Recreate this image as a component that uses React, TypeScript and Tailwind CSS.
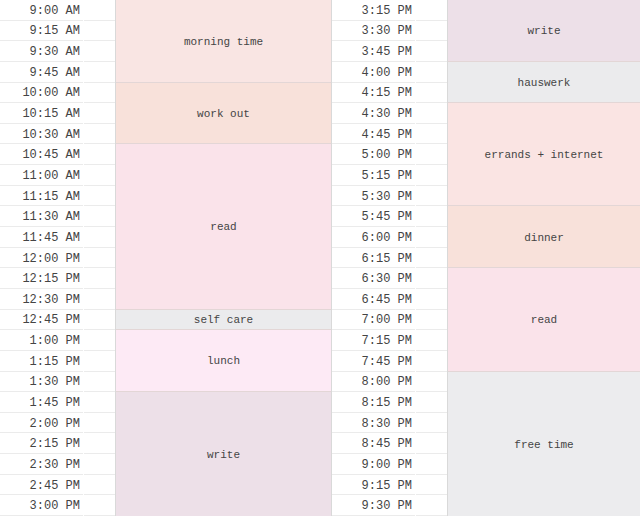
const left = {
  times: [
    "9:00 AM", "9:15 AM", "9:30 AM", "9:45 AM", "10:00 AM", "10:15 AM", "10:30 AM",
    "10:45 AM", "11:00 AM", "11:15 AM", "11:30 AM", "11:45 AM", "12:00 PM", "12:15 PM",
    "12:30 PM", "12:45 PM", "1:00 PM", "1:15 PM", "1:30 PM", "1:45 PM", "2:00 PM",
    "2:15 PM", "2:30 PM", "2:45 PM", "3:00 PM",
  ],
  blocks: [
    { label: "morning time", span: "row-span-4", bg: "bg-[#f9e5e3]" },
    { label: "work out", span: "row-span-3", bg: "bg-[#f8e1da]" },
    { label: "read", span: "row-span-8", bg: "bg-[#fae3ea]" },
    { label: "self care", span: "row-span-1", bg: "bg-[#ebebed]" },
    { label: "lunch", span: "row-span-3", bg: "bg-[#fdeaf5]" },
    { label: "write", span: "row-span-6", bg: "bg-[#ede0e8]" },
  ],
};

const right = {
  times: [
    "3:15 PM", "3:30 PM", "3:45 PM", "4:00 PM", "4:15 PM", "4:30 PM", "4:45 PM",
    "5:00 PM", "5:15 PM", "5:30 PM", "5:45 PM", "6:00 PM", "6:15 PM", "6:30 PM",
    "6:45 PM", "7:00 PM", "7:15 PM", "7:45 PM", "8:00 PM", "8:15 PM", "8:30 PM",
    "8:45 PM", "9:00 PM", "9:15 PM", "9:30 PM",
  ],
  blocks: [
    { label: "write", span: "row-span-3", bg: "bg-[#ede0e8]" },
    { label: "hauswerk", span: "row-span-2", bg: "bg-[#ebebed]" },
    { label: "errands + internet", span: "row-span-5", bg: "bg-[#fae4e3]" },
    { label: "dinner", span: "row-span-3", bg: "bg-[#f8e1da]" },
    { label: "read", span: "row-span-5", bg: "bg-[#fae3ea]" },
    { label: "free time", span: "row-span-7", bg: "bg-[#ececee]" },
  ],
};

type Half = typeof left;

function Column({ data, className }: { data: Half; className: string }) {
  return (
    <div className={`flex h-full ${className}`}>
      {/* time labels */}
      <div className="grid w-[115px] shrink-0 grid-cols-[83px_32px] grid-rows-[repeat(25,minmax(0,1fr))]">
        {data.times.map((t, i) => (
          <div key={i} className="contents">
            <div className="flex items-center justify-end border-b border-[#ebebeb] pt-[2px] pr-[3px] text-[12px] text-[#444]">
              {t}
            </div>
            <div className="ml-px border-b border-[#ebebeb]" />
          </div>
        ))}
      </div>
      {/* activity blocks */}
      <div className="grid flex-1 grid-rows-[repeat(25,minmax(0,1fr))] border-l border-[#d9d9d9]">
        {data.blocks.map((b, i) => (
          <div
            key={i}
            className={`${b.span} ${b.bg} flex items-center justify-center border-b border-[#e3d6d6] pt-[2px] text-[11px] text-[#444] last:border-b-0`}
          >
            {b.label}
          </div>
        ))}
      </div>
    </div>
  );
}

export default function App() {
  return (
    <div
      className="flex h-[516px] w-[640px] overflow-hidden bg-white"
      style={{ fontFamily: '"Liberation Mono", "Courier New", monospace' }}
    >
      <Column data={left} className="w-[331px] shrink-0" />
      <Column data={right} className="flex-1 border-l border-[#d9d9d9]" />
    </div>
  );
}
